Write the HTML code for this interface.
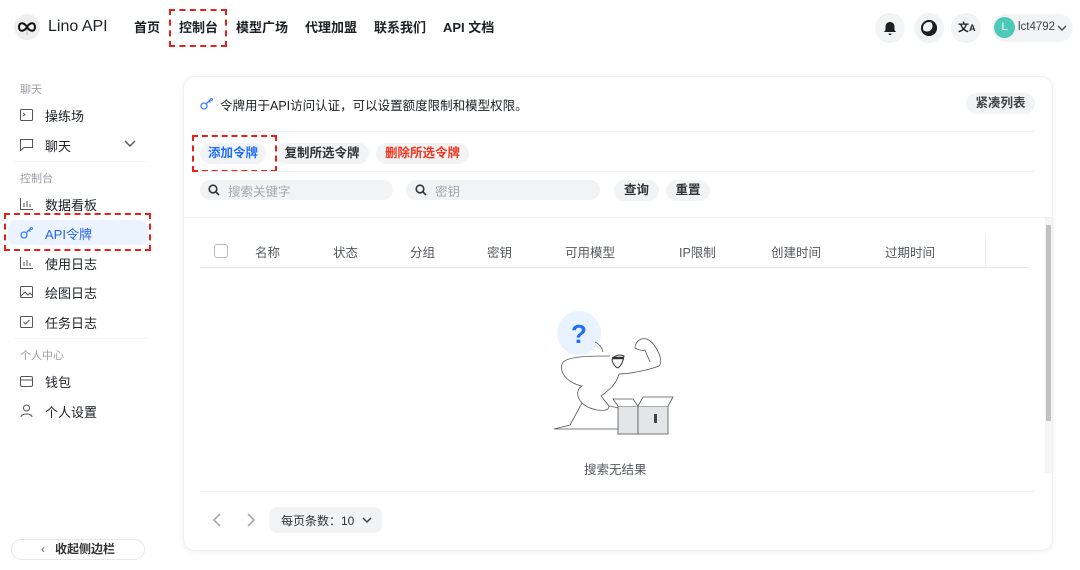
<!DOCTYPE html>
<html><head><meta charset="utf-8"><style>
*{margin:0;padding:0;box-sizing:border-box}
body{width:1080px;height:570px;overflow:hidden;background:#fff;font-family:"Liberation Sans","Noto Sans CJK SC",sans-serif;color:#1c1f23;position:relative}
.a{position:absolute;white-space:nowrap}
.nav{font-size:13px;font-weight:bold;top:17px}
.ic{position:absolute;width:30px;height:30px;border-radius:50%;background:#f2f3f5;top:13px}
.sl{font-size:11px;color:#9a9da2;left:20px}
.si{font-size:13px;left:45px;color:#1c1f23}
.sic{position:absolute;left:20px}
.btn{position:absolute;background:#f2f3f5;border-radius:11px;font-size:12.5px;font-weight:bold;text-align:center;line-height:21px;height:21px}
.hd{font-size:12.5px;color:#55585d;top:242px}
.red{position:absolute;border:2.5px dashed #e8201a}
.ln{position:absolute;height:1px;background:#eceef0}
</style></head><body>
<div class="a" style="left:14px;top:14px;width:26px;height:26px;border-radius:50%;background:#eeeeee"></div>
<svg class="a" style="left:16px;top:19px" width="22" height="16" viewBox="0 0 22 16"><path d="M11 8C8 3 3 3 3 8s5 5 8 0c3-5 8-5 8 0s-5 5-8 0" fill="none" stroke="#111" stroke-width="2"/><line x1="11" y1="10" x2="11" y2="16" stroke="#888" stroke-width=".6"/></svg>
<div class="a" style="left:48px;top:18px;font-size:16px">Lino API</div>
<div class="a nav" style="left:134px">首页</div>
<div class="a nav" style="left:179px">控制台</div>
<div class="a nav" style="left:236px">模型广场</div>
<div class="a nav" style="left:305px">代理加盟</div>
<div class="a nav" style="left:374px">联系我们</div>
<div class="a nav" style="left:443px">API 文档</div>
<div class="red" style="left:169px;top:9px;width:58px;height:38px"></div>
<div class="ic" style="left:875px"><svg width="30" height="30"><path d="M15 9c-3 0-4.5 2.2-4.5 5v3l-1.5 2h12l-1.5-2v-3c0-2.8-1.5-5-4.5-5z M13.5 20.5a1.5 1.5 0 0 0 3 0z" fill="#1c1f23"/></svg></div>
<div class="ic" style="left:914px"><svg width="30" height="30"><circle cx="15" cy="15" r="8" fill="#1c1f23"/><circle cx="13" cy="13" r="5.5" fill="#f2f3f5"/><circle cx="15" cy="15" r="7" fill="none" stroke="#1c1f23" stroke-width="2"/></svg></div>
<div class="ic" style="left:951px"><div class="a" style="left:7px;top:6px;font-size:11px;font-weight:bold">文<span style="font-size:9px">A</span></div></div>
<div class="a" style="left:992px;top:14px;width:81px;height:28px;border-radius:14px;background:#f2f3f5"></div>
<div class="a" style="left:994px;top:17px;width:21px;height:21px;border-radius:50%;background:#4fc9b7;color:#fff;font-size:11px;text-align:center;line-height:21px">L</div>
<div class="a" style="left:1018px;top:21px;font-size:11.5px;color:#444">lct4792</div>
<svg class="a" style="left:1057px;top:24px" width="10" height="8"><path d="M1 2l4 4 4-4" fill="none" stroke="#555" stroke-width="1.5"/></svg>
<div class="a sl" style="top:81px">聊天</div>
<svg class="sic" style="top:109px" width="13" height="12"><rect x=".5" y=".5" width="12" height="11" rx="1" fill="none" stroke="#555"/><path d="M3 4l2 1.5L3 7" fill="none" stroke="#555"/></svg>
<div class="a si" style="top:106px">操练场</div>
<svg class="sic" style="top:139px" width="13" height="12"><path d="M.5.5h12v8H4L.5 11.5z" fill="none" stroke="#555"/></svg>
<div class="a si" style="top:136px">聊天</div>
<svg class="a" style="left:124px;top:140px" width="12" height="8"><path d="M1 1l5 5 5-5" fill="none" stroke="#555" stroke-width="1.4"/></svg>
<div class="ln" style="left:14px;top:161px;width:134px;background:#f3f4f5"></div>
<div class="a sl" style="top:170px">控制台</div>
<svg class="sic" style="top:198px" width="13" height="12"><path d="M.5 0v11.5H13M4 9V5M7 9V3M10 9V6" fill="none" stroke="#555"/></svg>
<div class="a si" style="top:195px">数据看板</div>
<div class="a" style="left:8px;top:220px;width:140px;height:25px;border-radius:8px;background:#eaf3ff"></div>
<svg class="sic" style="top:227px" width="14" height="12"><circle cx="4" cy="8" r="3" fill="none" stroke="#3b82f6" stroke-width="1.3"/><path d="M6 6l5-5M9 3l1.5 1.5" fill="none" stroke="#3b82f6" stroke-width="1.3"/><circle cx="11.5" cy="1.5" r="1" fill="none" stroke="#3b82f6"/></svg>
<div class="a si" style="top:224px;color:#2563eb">API令牌</div>
<div class="red" style="left:4px;top:213px;width:147px;height:38px"></div>
<svg class="sic" style="top:257px" width="13" height="12"><path d="M.5 0v11.5H13M4 9V5M7 9V3M10 9V6" fill="none" stroke="#555"/></svg>
<div class="a si" style="top:254px">使用日志</div>
<svg class="sic" style="top:286px" width="13" height="12"><rect x=".5" y=".5" width="12" height="11" rx="1" fill="none" stroke="#555"/><path d="M1 10l4-4 3 3 2-2 2 2" fill="none" stroke="#555"/></svg>
<div class="a si" style="top:283px">绘图日志</div>
<svg class="sic" style="top:316px" width="13" height="12"><rect x=".5" y=".5" width="12" height="11" rx="1" fill="none" stroke="#555"/><path d="M3.5 6l2 2 4-4" fill="none" stroke="#555"/></svg>
<div class="a si" style="top:313px">任务日志</div>
<div class="ln" style="left:14px;top:338px;width:134px;background:#f3f4f5"></div>
<div class="a sl" style="top:347px">个人中心</div>
<svg class="sic" style="top:376px" width="13" height="11"><rect x=".5" y=".5" width="12" height="10" rx="1.5" fill="none" stroke="#555"/><path d="M.5 4h12" stroke="#555"/></svg>
<div class="a si" style="top:372px">钱包</div>
<svg class="sic" style="top:404px" width="13" height="13"><circle cx="6.5" cy="4" r="3" fill="none" stroke="#555"/><path d="M1 13c0-4 11-4 11 0" fill="none" stroke="#555"/></svg>
<div class="a si" style="top:402px">个人设置</div>
<div class="a" style="left:11px;top:539px;width:134px;height:21px;border:1px solid #e6e8ea;border-radius:11px;font-size:12px;font-weight:bold;color:#333;text-align:center;line-height:19px"><span style="color:#666;font-weight:normal;margin-right:10px">‹</span>收起侧边栏</div>
<div class="a" style="left:183px;top:76px;width:870px;height:475px;border-radius:12px;border:1px solid #eef0f2;box-shadow:0 1px 6px rgba(0,0,0,.06);background:#fff"></div>
<svg class="a" style="left:200px;top:98px" width="14" height="12"><circle cx="4" cy="8" r="3" fill="none" stroke="#3b82f6" stroke-width="1.3"/><path d="M6 6l5-5M9 3l1.5 1.5" fill="none" stroke="#3b82f6" stroke-width="1.3"/><circle cx="11.5" cy="1.5" r="1" fill="none" stroke="#3b82f6"/></svg>
<div class="a" style="left:220px;top:95px;font-size:12.5px;color:#1c1f23">令牌用于API访问认证，可以设置额度限制和模型权限。</div>
<div class="btn" style="left:966px;top:93px;width:69px;color:#444">紧凑列表</div>
<div class="ln" style="left:200px;top:131px;width:835px"></div>
<div class="btn" style="left:200px;top:143px;width:66px;color:#1f6fff">添加令牌</div>
<div class="btn" style="left:275px;top:143px;width:94px;color:#333">复制所选令牌</div>
<div class="btn" style="left:376px;top:143px;width:93px;color:#f5341f">删除所选令牌</div>
<div class="red" style="left:192px;top:135px;width:85px;height:37px"></div>
<div class="ln" style="left:200px;top:171px;width:835px"></div>
<div class="a" style="left:200px;top:180px;width:193px;height:20px;border-radius:10px;background:#f2f3f5"></div>
<div class="a" style="left:406px;top:180px;width:194px;height:20px;border-radius:10px;background:#f2f3f5"></div>
<svg class="a" style="left:208px;top:184px" width="12" height="12"><circle cx="5" cy="5" r="3.8" fill="none" stroke="#333" stroke-width="1.6"/><path d="M8 8l3 3" stroke="#333" stroke-width="1.6"/></svg>
<div class="a" style="left:228px;top:181px;font-size:12.5px;color:#a4a7ab">搜索关键字</div>
<svg class="a" style="left:415px;top:184px" width="12" height="12"><circle cx="5" cy="5" r="3.8" fill="none" stroke="#333" stroke-width="1.6"/><path d="M8 8l3 3" stroke="#333" stroke-width="1.6"/></svg>
<div class="a" style="left:435px;top:181px;font-size:12.5px;color:#a4a7ab">密钥</div>
<div class="btn" style="left:614px;top:180px;width:45px;color:#333">查询</div>
<div class="btn" style="left:666px;top:180px;width:44px;color:#333">重置</div>
<div class="ln" style="left:184px;top:217px;width:868px"></div>
<div class="a" style="left:1045px;top:218px;width:7px;height:255px;background:#f5f5f5"></div>
<div class="a" style="left:1046px;top:225px;width:5px;height:196px;background:#c1c1c1"></div>
<div class="a" style="left:214px;top:244px;width:14px;height:14px;border:1px solid #bbb;border-radius:3px"></div>
<div class="a hd" style="left:255px">名称</div>
<div class="a hd" style="left:333px">状态</div>
<div class="a hd" style="left:410px">分组</div>
<div class="a hd" style="left:487px">密钥</div>
<div class="a hd" style="left:565px">可用模型</div>
<div class="a hd" style="left:679px">IP限制</div>
<div class="a hd" style="left:771px">创建时间</div>
<div class="a hd" style="left:885px">过期时间</div>
<div class="a" style="left:985px;top:235px;width:1px;height:32px;background:#eceef0"></div>
<div class="ln" style="left:200px;top:267px;width:828px;background:#e4e6e8"></div>
<svg class="a" style="left:550px;top:310px" width="130" height="130" viewBox="0 0 130 130">
<circle cx="29" cy="23" r="22" fill="#e8f3ff"/>
<text x="21" y="33" font-size="26" font-weight="bold" fill="#1f6fff" font-family="Liberation Sans">?</text>
<path d="M45 32c5 2 7 6 8 10" fill="none" stroke="#555" stroke-width=".8"/>
<path d="M20 115l12-22c10 0 30 2 45 8l0 18H4z" fill="#fff" stroke="#555" stroke-width=".8"/>
<path d="M60 46c-20 0-45 0-48 8-3 12 10 20 20 22-8 4-6 20 15 24 8 1 12 0 12-4l-8-10c5-4 15-10 18-22 10 0 30-4 40-8 5-5-2-20-10-26-8-4-14 2-14 8 3 2 8 3 10 2l5 12" fill="#fff" stroke="#555" stroke-width=".8"/>
<path d="M62 50c2-5 8-6 12-4-1 6-3 10-6 12-3-1-5-4-6-8z" fill="#fff" stroke="#333" stroke-width="1"/>
<path d="M62 48h12" stroke="#333" stroke-width="2.5"/>
<rect x="68" y="96" width="20" height="28" fill="#e4e5e7" stroke="#555" stroke-width=".8"/>
<rect x="88" y="96" width="30" height="28" fill="#e4e5e7" stroke="#555" stroke-width=".8"/>
<path d="M88 96l5-9h30l-5 9M68 96l-5-7h20l5 7" fill="#fff" stroke="#555" stroke-width=".8"/>
<rect x="104" y="104" width="3" height="9" fill="#444"/>
</svg>
<div class="a" style="left:584px;top:459px;font-size:12.5px;color:#55585d">搜索无结果</div>
<div class="ln" style="left:200px;top:491px;width:835px"></div>
<svg class="a" style="left:212px;top:513px" width="10" height="14"><path d="M8 1L2 7l6 6" fill="none" stroke="#aaa" stroke-width="1.6"/></svg>
<svg class="a" style="left:246px;top:513px" width="10" height="14"><path d="M2 1l6 6-6 6" fill="none" stroke="#aaa" stroke-width="1.6"/></svg>
<div class="a" style="left:269px;top:507px;width:113px;height:26px;border-radius:8px;background:#f2f3f5"></div>
<div class="a" style="left:281px;top:512px;font-size:12px;color:#333">每页条数：10</div>
<svg class="a" style="left:362px;top:516px" width="10" height="8"><path d="M1 2l4 4 4-4" fill="none" stroke="#444" stroke-width="1.5"/></svg>
</body></html>
